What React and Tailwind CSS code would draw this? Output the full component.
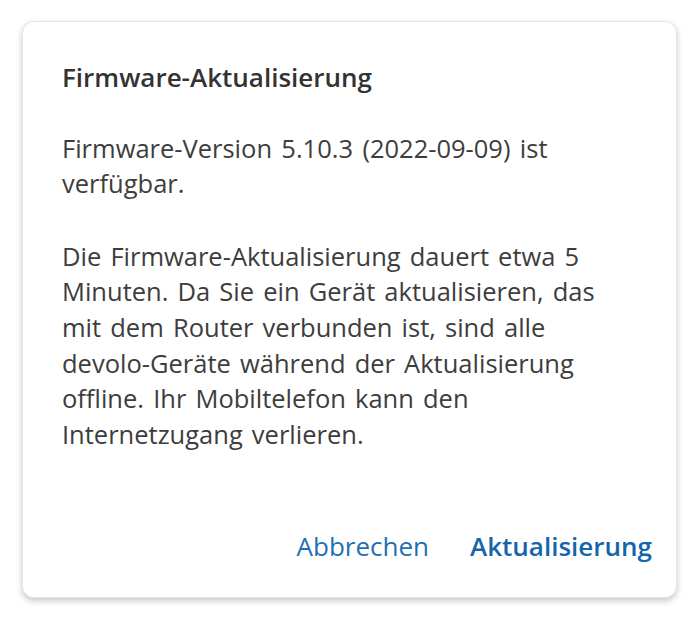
export default function App() {
  return (
    <div className="w-[700px] h-[619px] bg-white pt-[21px] pl-[22px]" style={{ fontFamily: '"Open Sans", sans-serif' }}>
      <div className="w-[655px] h-[577px] rounded-[12px] bg-white border border-[#e6e6e6] shadow-[0_3px_6px_rgba(0,0,0,0.22)] flex flex-col pt-[38px] pl-[39px] pr-[24px] pb-[33px]">
        <h1 className="text-[26px] leading-[35.5px] font-semibold text-[#333333]">Firmware-Aktualisierung</h1>
        <p className="mt-[35px] w-[555px] text-[25.5px] leading-[35px] text-[#3d3d3d] [word-spacing:2.7px]">
          Firmware-Version 5.10.3 (2022-09-09) ist verfügbar.
        </p>
        <p className="mt-[38px] w-[555px] text-[25.5px] leading-[35.7px] text-[#3d3d3d] [word-spacing:2.5px]">
          Die Firmware-Aktualisierung dauert etwa 5 Minuten. Da Sie ein Gerät aktualisieren, das mit dem Router verbunden ist, sind alle devolo-Geräte während der Aktualisierung offline. Ihr Mobiltelefon kann den Internetzugang verlieren.
        </p>
        <div className="mt-auto flex justify-end items-center gap-[41px]">
          <button className="text-[26px] leading-[35.5px] text-[#1d6fb4]">Abbrechen</button>
          <button className="text-[26px] leading-[35.5px] font-semibold text-[#1565ad]">Aktualisierung</button>
        </div>
      </div>
    </div>
  );
}
